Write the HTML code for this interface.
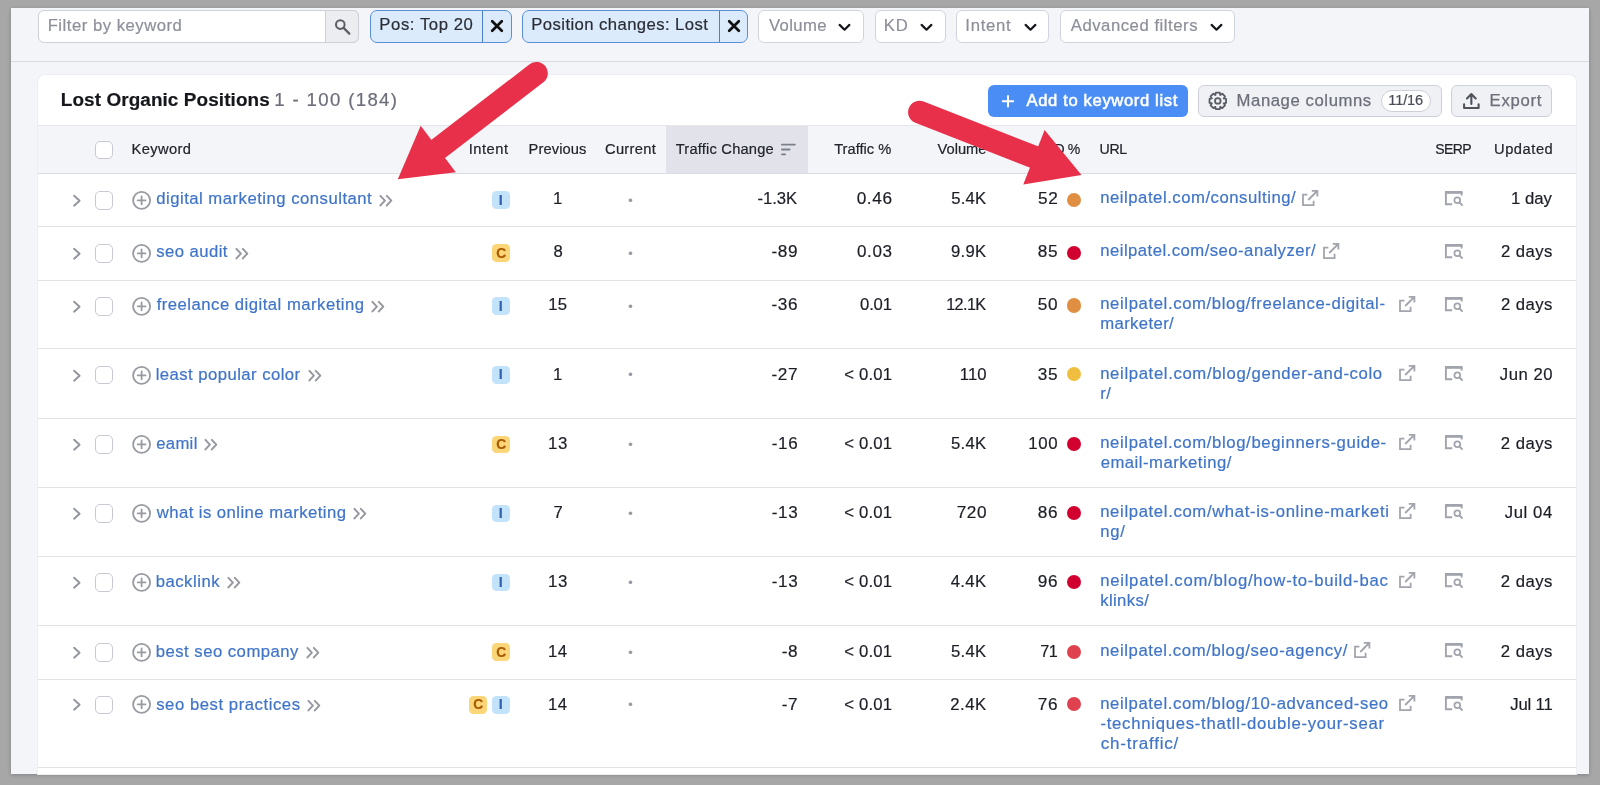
<!DOCTYPE html>
<html lang="en"><head><meta charset="utf-8"><title>Lost Organic Positions</title>
<style>
html,body{margin:0;padding:0}
body{width:1600px;height:785px;overflow:hidden;background:#a7a7a7;position:relative;font-family:"Liberation Sans", Arial, sans-serif}
#page{position:absolute;left:0;top:0;width:1600px;height:785px;overflow:hidden;will-change:transform}
#page::before{content:"";position:absolute;left:10.6px;top:8.1px;width:1578.9px;height:766.3px;background:#f4f5f9;box-shadow:0 1px 4px rgba(0,0,0,.22)}
div,svg,.t{position:absolute}
div{box-sizing:border-box}
section,article{display:contents}
.t{white-space:pre;line-height:20px;-webkit-text-stroke:.2px}
svg{overflow:visible}
</style></head>
<body>
<div id="page">
<section id="filters">
<div style="left:38px;top:10px;width:321px;height:32.5px;background:#fff;border:1px solid #cdd0d7;border-radius:6px"></div>
<div style="left:325px;top:10px;width:34px;height:32.5px;background:#ecedf1;border:1px solid #cdd0d7;border-radius:0 6px 6px 0"></div>
<span class="t" style="left:47.65px;top:16px;font-size:16.7px;color:#8d909a;letter-spacing:0.506px">Filter by keyword</span>
<svg style="left:331px;top:15px" width="22" height="22" viewBox="0 0 22 22" ><circle cx="9.3" cy="9.6" r="4.3" fill="none" stroke="#5a5d64" stroke-width="2"/><path d="M12.6 12.9 L18.3 18.6" stroke="#5a5d64" stroke-width="2.2" stroke-linecap="round"/></svg>
<div style="left:370px;top:10px;width:142px;height:32.5px;background:#dcebfb;border:1px solid #5a8fd8;border-radius:7px"></div>
<div style="left:481.5px;top:10.5px;width:1.6px;height:31.5px;background:#4a7fd0"></div>
<span class="t" style="left:379.35px;top:15px;font-size:16.7px;color:#2a2d36;letter-spacing:0.570px">Pos: Top 20</span>
<svg style="left:490.3px;top:19px" width="14" height="14" viewBox="0 0 14 14" ><path d="M2.2 2.2L11.8 11.8M11.8 2.2L2.2 11.8" stroke="#111" stroke-width="2.7" stroke-linecap="round"/></svg>
<div style="left:522px;top:10px;width:226px;height:32.5px;background:#dcebfb;border:1px solid #5a8fd8;border-radius:7px"></div>
<div style="left:718.5px;top:10.5px;width:1.6px;height:31.5px;background:#4a7fd0"></div>
<span class="t" style="left:531.25px;top:15px;font-size:16.7px;color:#2a2d36;letter-spacing:0.417px">Position changes: Lost</span>
<svg style="left:726.8px;top:19px" width="14" height="14" viewBox="0 0 14 14" ><path d="M2.2 2.2L11.8 11.8M11.8 2.2L2.2 11.8" stroke="#111" stroke-width="2.7" stroke-linecap="round"/></svg>
<div style="left:758px;top:10px;width:106px;height:32.5px;background:#fff;border:1px solid #d2d4db;border-radius:6px"></div>
<span class="t" style="left:769.00px;top:16px;font-size:16.7px;color:#8c8f99;letter-spacing:0.350px">Volume</span>
<svg style="left:837.25px;top:22px" width="15" height="11" viewBox="0 0 15 11" ><path d="M2.6 2.9L7.5 7.7L12.4 2.9" fill="none" stroke="#15171c" stroke-width="2.2" stroke-linecap="round" stroke-linejoin="round"/></svg>
<div style="left:874.5px;top:10px;width:71.5px;height:32.5px;background:#fff;border:1px solid #d2d4db;border-radius:6px"></div>
<span class="t" style="left:883.75px;top:16px;font-size:16.7px;color:#8c8f99;letter-spacing:0.750px">KD</span>
<svg style="left:918.5px;top:22px" width="15" height="11" viewBox="0 0 15 11" ><path d="M2.6 2.9L7.5 7.7L12.4 2.9" fill="none" stroke="#15171c" stroke-width="2.2" stroke-linecap="round" stroke-linejoin="round"/></svg>
<div style="left:956px;top:10px;width:93px;height:32.5px;background:#fff;border:1px solid #d2d4db;border-radius:6px"></div>
<span class="t" style="left:965.25px;top:16px;font-size:16.7px;color:#8c8f99;letter-spacing:0.750px">Intent</span>
<svg style="left:1023.0px;top:22px" width="15" height="11" viewBox="0 0 15 11" ><path d="M2.6 2.9L7.5 7.7L12.4 2.9" fill="none" stroke="#15171c" stroke-width="2.2" stroke-linecap="round" stroke-linejoin="round"/></svg>
<div style="left:1060px;top:10px;width:175px;height:32.5px;background:#fff;border:1px solid #d2d4db;border-radius:6px"></div>
<span class="t" style="left:1070.75px;top:16px;font-size:16.7px;color:#8c8f99;letter-spacing:0.533px">Advanced filters</span>
<svg style="left:1208.5px;top:22px" width="15" height="11" viewBox="0 0 15 11" ><path d="M2.6 2.9L7.5 7.7L12.4 2.9" fill="none" stroke="#15171c" stroke-width="2.2" stroke-linecap="round" stroke-linejoin="round"/></svg></section>
<div style="left:11px;top:60.5px;width:1578px;height:1.4px;background:#d9dae1"></div>
<section id="card">
<div style="left:38px;top:75px;width:1538px;height:699.4px;background:#fff;border-radius:7px 7px 0 0;box-shadow:0 0 0 1px #eceef2"></div>
<span class="t" style="left:60.75px;top:90px;font-size:18.9px;color:#15171c;letter-spacing:0.102px;font-weight:700">Lost Organic Positions</span>
<span class="t" style="left:274.25px;top:90px;font-size:18.6px;color:#6c6e79;letter-spacing:1.354px">1 - 100 (184)</span>
<div style="left:988px;top:85px;width:200px;height:32px;background:#4a8ef5;border-radius:6px"></div>
<svg style="left:1000.5px;top:94px" width="14" height="14" viewBox="0 0 14 14" ><path d="M7 2V12.4M1.8 7.2H12.2" stroke="#fff" stroke-width="2" stroke-linecap="round"/></svg>
<span class="t" style="left:1026.55px;top:91px;font-size:16.6px;color:#fff;letter-spacing:0.636px;-webkit-text-stroke:0.55px #fff">Add to keyword list</span>
<div style="left:1198px;top:84.5px;width:243.5px;height:32.5px;background:#f0f1f5;border:1px solid #cdd0d8;border-radius:6px"></div>
<svg style="left:1207px;top:90px" width="22" height="22" viewBox="0 0 22 22" ><path d="M8.35 4.99L8.82 2.63L12.78 2.63L13.25 4.99L13.25 4.99L15.24 3.65L18.05 6.46L16.71 8.45L16.71 8.45L19.07 8.92L19.07 12.88L16.71 13.35L16.71 13.35L18.05 15.34L15.24 18.15L13.25 16.81L13.25 16.81L12.78 19.17L8.82 19.17L8.35 16.81L8.35 16.81L6.36 18.15L3.55 15.34L4.89 13.35L4.89 13.35L2.53 12.88L2.53 8.92L4.89 8.45L4.89 8.45L3.55 6.46L6.36 3.65L8.35 4.99Z" fill="none" stroke="#585b64" stroke-width="1.8" stroke-linejoin="round"/><circle cx="10.8" cy="10.9" r="2.8" fill="none" stroke="#585b64" stroke-width="1.8"/></svg>
<span class="t" style="left:1236.55px;top:91px;font-size:16.7px;color:#6c6f7a;letter-spacing:0.581px;-webkit-text-stroke:0.25px #6c6f7a">Manage columns</span>
<div style="left:1380.5px;top:90px;width:50px;height:22px;background:#fff;border:1px solid #cdd0d8;border-radius:11px"></div>
<span class="t" style="left:1388.30px;top:90px;font-size:14.6px;color:#4a4d57;letter-spacing:-0.150px">11/16</span>
<div style="left:1451px;top:84.5px;width:101px;height:32.5px;background:#f0f1f5;border:1px solid #cdd0d8;border-radius:6px"></div>
<svg style="left:1461px;top:91px" width="20" height="20" viewBox="0 0 20 20" ><path d="M3.1 13.2V17H17.6V13.2" fill="none" stroke="#50535c" stroke-width="2.1" stroke-linejoin="round" stroke-linecap="round"/><path d="M10.35 13V3.6M6 7.4L10.35 3.1L14.7 7.4" fill="none" stroke="#50535c" stroke-width="2.1" stroke-linecap="round" stroke-linejoin="round"/></svg>
<span class="t" style="left:1489.55px;top:91px;font-size:16.7px;color:#6c6f7a;letter-spacing:0.700px;-webkit-text-stroke:0.25px #6c6f7a">Export</span>
<div style="left:38px;top:125px;width:1538px;height:48.5px;background:#f4f5f9;border-top:1px solid #e6e7ec;border-bottom:1px solid #dcdde4;box-sizing:border-box"></div>
<div style="left:666px;top:125.5px;width:141.8px;height:47.5px;background:#e2e3ea"></div>
<div style="left:94.5px;top:140.5px;width:18.8px;height:18.8px;background:#fff;border:1px solid #c7cad2;border-radius:5px;box-sizing:border-box"></div>
<span class="t" style="left:131.50px;top:139px;font-size:14.7px;color:#22242c;letter-spacing:0.375px">Keyword</span>
<span class="t" style="left:468.75px;top:139px;font-size:14.7px;color:#22242c;letter-spacing:0.500px">Intent</span>
<span class="t" style="left:528.50px;top:139px;font-size:14.7px;color:#22242c;letter-spacing:0.107px">Previous</span>
<span class="t" style="left:605.00px;top:139px;font-size:14.7px;color:#22242c;letter-spacing:0.292px">Current</span>
<span class="t" style="left:675.75px;top:139px;font-size:14.7px;color:#22242c;letter-spacing:0.192px">Traffic Change</span>
<svg style="left:780px;top:142px" width="17" height="15" viewBox="0 0 17 15" ><path d="M1.9 2.7H14.9M1.9 7.5H9.6M1.9 12.3H5.2" stroke="#7d808a" stroke-width="1.8" stroke-linecap="round"/></svg>
<span class="t" style="left:834.15px;top:139px;font-size:14.7px;color:#22242c;letter-spacing:0.013px">Traffic %</span>
<span class="t" style="left:937.50px;top:139px;font-size:14.7px;color:#22242c;letter-spacing:0.000px">Volume</span>
<span class="t" style="left:1045.55px;top:139px;font-size:14.04px;color:#22242c;letter-spacing:-0.373px">KD %</span>
<span class="t" style="left:1099.54px;top:139px;font-size:14.15px;color:#22242c;letter-spacing:-0.350px">URL</span>
<span class="t" style="left:1435.27px;top:139px;font-size:14.04px;color:#22242c;letter-spacing:-0.600px">SERP</span>
<span class="t" style="left:1494.00px;top:139px;font-size:14.7px;color:#22242c;letter-spacing:0.542px">Updated</span>
<article class="row">
<svg style="left:70px;top:192.8px" width="14" height="16" viewBox="0 0 14 16" ><path d="M4.1 2.7L9.6 7.7L4.1 12.7" fill="none" stroke="#92959c" stroke-width="1.9" stroke-linecap="round" stroke-linejoin="round"/></svg>
<div style="left:94.5px;top:191.0px;width:18.8px;height:18.8px;background:#fff;border:1px solid #c7cad2;border-radius:5px"></div>
<svg style="left:131px;top:189.9px" width="22" height="22" viewBox="0 0 22 22" ><circle cx="10.6" cy="10.4" r="8.5" fill="none" stroke="#989ba1" stroke-width="1.8"/><path d="M10.6 6.5V14.3M6.7 10.4H14.5" stroke="#989ba1" stroke-width="1.8" stroke-linecap="round"/></svg>
<span class="t" style="left:156.20px;top:189px;font-size:16.7px;color:#3f74c7;letter-spacing:0.493px">digital marketing consultant</span>
<svg style="left:378.35px;top:193.0px" width="17" height="16" viewBox="0 0 17 16" ><path d="M2.4 2.9L6.9 7.65L2.4 12.4M8.8 2.9L13.3 7.65L8.8 12.4" fill="none" stroke="#95989e" stroke-width="2" stroke-linecap="round" stroke-linejoin="round"/></svg>
<div style="left:491.5px;top:191.3px;width:18.6px;height:17.8px;background:#c3e3fb;border-radius:4.5px"></div>
<span class="t" style="left:498.79px;top:190px;font-size:14.4px;color:#3463b4;font-weight:700">I</span>
<span class="t" style="left:553.12px;top:189px;font-size:16.7px;color:#1c1e26;letter-spacing:0.000px">1</span>
<span class="t" style="left:628.14px;top:191px;font-size:12.6px;color:#999ba2">•</span>
<span class="t" style="left:757.50px;top:189px;font-size:16.7px;color:#1c1e26;letter-spacing:-0.062px">-1.3K</span>
<span class="t" style="left:856.65px;top:188px;font-size:17.2px;color:#1c1e26;letter-spacing:0.650px">0.46</span>
<span class="t" style="left:951.25px;top:189px;font-size:16.7px;color:#1c1e26;letter-spacing:0.167px">5.4K</span>
<span class="t" style="left:1038.07px;top:188px;font-size:17.2px;color:#1c1e26;letter-spacing:0.650px">52</span>
<div style="left:1067px;top:192.5px;width:14.2px;height:14.2px;background:#e08e41;border-radius:50%"></div>
<span class="t" style="left:1100.20px;top:188px;font-size:16.7px;color:#3f74c7;letter-spacing:0.533px">neilpatel.com/consulting/</span>
<svg style="left:1300.9px;top:189.0px" width="19" height="19" viewBox="0 0 19 19" ><path d="M6.4 5.6H2V16.2H12.6V11.8" fill="none" stroke="#a3a5ac" stroke-width="1.8"/><path d="M7.2 11L16.2 2M10.8 1.9H16.4V7.5" fill="none" stroke="#a3a5ac" stroke-width="1.8"/></svg>
<svg style="left:1444px;top:190.0px" width="20" height="17" viewBox="0 0 20 17" ><path d="M1 1H18.5V3.8H1Z" fill="#a1a4ac"/><path d="M1.9 2V14.2H8.2M17.6 2V5.6" fill="none" stroke="#a1a4ac" stroke-width="1.9"/><circle cx="13.3" cy="10.3" r="2.9" fill="none" stroke="#a1a4ac" stroke-width="1.7"/><path d="M15.4 12.4L18 15" stroke="#a1a4ac" stroke-width="1.9" stroke-linecap="round"/></svg>
<span class="t" style="left:1511.05px;top:189px;font-size:16.7px;color:#1c1e26;letter-spacing:-0.012px">1 day</span></article>
<article class="row">
<div style="left:38px;top:226px;width:1538px;height:1px;background:#e1e2e8"></div>
<svg style="left:70px;top:245.8px" width="14" height="16" viewBox="0 0 14 16" ><path d="M4.1 2.7L9.6 7.7L4.1 12.7" fill="none" stroke="#92959c" stroke-width="1.9" stroke-linecap="round" stroke-linejoin="round"/></svg>
<div style="left:94.5px;top:244.0px;width:18.8px;height:18.8px;background:#fff;border:1px solid #c7cad2;border-radius:5px"></div>
<svg style="left:131px;top:242.9px" width="22" height="22" viewBox="0 0 22 22" ><circle cx="10.6" cy="10.4" r="8.5" fill="none" stroke="#989ba1" stroke-width="1.8"/><path d="M10.6 6.5V14.3M6.7 10.4H14.5" stroke="#989ba1" stroke-width="1.8" stroke-linecap="round"/></svg>
<span class="t" style="left:156.20px;top:242px;font-size:16.7px;color:#3f74c7;letter-spacing:0.444px">seo audit</span>
<svg style="left:234.1px;top:246.0px" width="17" height="16" viewBox="0 0 17 16" ><path d="M2.4 2.9L6.9 7.65L2.4 12.4M8.8 2.9L13.3 7.65L8.8 12.4" fill="none" stroke="#95989e" stroke-width="2" stroke-linecap="round" stroke-linejoin="round"/></svg>
<div style="left:491.5px;top:244.3px;width:18.6px;height:17.8px;background:#fbd679;border-radius:4.5px"></div>
<span class="t" style="left:496.32px;top:244px;font-size:13.8px;color:#a95a00;font-weight:700">C</span>
<span class="t" style="left:553.38px;top:242px;font-size:16.7px;color:#1c1e26;letter-spacing:0.000px">8</span>
<span class="t" style="left:628.14px;top:244px;font-size:12.6px;color:#999ba2">•</span>
<span class="t" style="left:771.50px;top:241px;font-size:17.2px;color:#1c1e26;letter-spacing:0.650px">-89</span>
<span class="t" style="left:856.99px;top:242px;font-size:17.02px;color:#1c1e26;letter-spacing:0.650px">0.03</span>
<span class="t" style="left:951.00px;top:242px;font-size:16.7px;color:#1c1e26;letter-spacing:0.250px">9.9K</span>
<span class="t" style="left:1037.81px;top:241px;font-size:17.2px;color:#1c1e26;letter-spacing:0.650px">85</span>
<div style="left:1067px;top:245.5px;width:14.2px;height:14.2px;background:#d1002f;border-radius:50%"></div>
<span class="t" style="left:1100.20px;top:241px;font-size:16.7px;color:#3f74c7;letter-spacing:0.473px">neilpatel.com/seo-analyzer/</span>
<svg style="left:1321.5px;top:242.0px" width="19" height="19" viewBox="0 0 19 19" ><path d="M6.4 5.6H2V16.2H12.6V11.8" fill="none" stroke="#a3a5ac" stroke-width="1.8"/><path d="M7.2 11L16.2 2M10.8 1.9H16.4V7.5" fill="none" stroke="#a3a5ac" stroke-width="1.8"/></svg>
<svg style="left:1444px;top:243.0px" width="20" height="17" viewBox="0 0 20 17" ><path d="M1 1H18.5V3.8H1Z" fill="#a1a4ac"/><path d="M1.9 2V14.2H8.2M17.6 2V5.6" fill="none" stroke="#a1a4ac" stroke-width="1.9"/><circle cx="13.3" cy="10.3" r="2.9" fill="none" stroke="#a1a4ac" stroke-width="1.7"/><path d="M15.4 12.4L18 15" stroke="#a1a4ac" stroke-width="1.9" stroke-linecap="round"/></svg>
<span class="t" style="left:1501.00px;top:242px;font-size:16.7px;color:#1c1e26;letter-spacing:0.450px">2 days</span></article>
<article class="row">
<div style="left:38px;top:280px;width:1538px;height:1px;background:#e1e2e8"></div>
<svg style="left:70px;top:298.7px" width="14" height="16" viewBox="0 0 14 16" ><path d="M4.1 2.7L9.6 7.7L4.1 12.7" fill="none" stroke="#92959c" stroke-width="1.9" stroke-linecap="round" stroke-linejoin="round"/></svg>
<div style="left:94.5px;top:296.9px;width:18.8px;height:18.8px;background:#fff;border:1px solid #c7cad2;border-radius:5px"></div>
<svg style="left:131px;top:295.8px" width="22" height="22" viewBox="0 0 22 22" ><circle cx="10.6" cy="10.4" r="8.5" fill="none" stroke="#989ba1" stroke-width="1.8"/><path d="M10.6 6.5V14.3M6.7 10.4H14.5" stroke="#989ba1" stroke-width="1.8" stroke-linecap="round"/></svg>
<span class="t" style="left:156.70px;top:295px;font-size:16.7px;color:#3f74c7;letter-spacing:0.483px">freelance digital marketing</span>
<svg style="left:369.6px;top:298.9px" width="17" height="16" viewBox="0 0 17 16" ><path d="M2.4 2.9L6.9 7.65L2.4 12.4M8.8 2.9L13.3 7.65L8.8 12.4" fill="none" stroke="#95989e" stroke-width="2" stroke-linecap="round" stroke-linejoin="round"/></svg>
<div style="left:491.5px;top:297.2px;width:18.6px;height:17.8px;background:#c3e3fb;border-radius:4.5px"></div>
<span class="t" style="left:498.79px;top:296px;font-size:14.4px;color:#3463b4;font-weight:700">I</span>
<span class="t" style="left:548.35px;top:295px;font-size:16.7px;color:#1c1e26;letter-spacing:0.050px">15</span>
<span class="t" style="left:628.14px;top:297px;font-size:12.6px;color:#999ba2">•</span>
<span class="t" style="left:771.50px;top:294px;font-size:17.2px;color:#1c1e26;letter-spacing:0.650px">-36</span>
<span class="t" style="left:860.00px;top:295px;font-size:16.7px;color:#1c1e26;letter-spacing:-0.150px">0.01</span>
<span class="t" style="left:946.21px;top:294px;font-size:16.2px;color:#1c1e26;letter-spacing:-0.600px">12.1K</span>
<span class="t" style="left:1037.81px;top:294px;font-size:17.2px;color:#1c1e26;letter-spacing:0.650px">50</span>
<div style="left:1067px;top:298.4px;width:14.2px;height:14.2px;background:#e08e41;border-radius:50%"></div>
<span class="t" style="left:1100.20px;top:294px;font-size:16.7px;color:#3f74c7;letter-spacing:0.619px">neilpatel.com/blog/freelance-digital-</span>
<span class="t" style="left:1100.20px;top:314px;font-size:16.7px;color:#3f74c7;letter-spacing:0.381px">marketer/</span>
<svg style="left:1398.25px;top:294.9px" width="19" height="19" viewBox="0 0 19 19" ><path d="M6.4 5.6H2V16.2H12.6V11.8" fill="none" stroke="#a3a5ac" stroke-width="1.8"/><path d="M7.2 11L16.2 2M10.8 1.9H16.4V7.5" fill="none" stroke="#a3a5ac" stroke-width="1.8"/></svg>
<svg style="left:1444px;top:295.9px" width="20" height="17" viewBox="0 0 20 17" ><path d="M1 1H18.5V3.8H1Z" fill="#a1a4ac"/><path d="M1.9 2V14.2H8.2M17.6 2V5.6" fill="none" stroke="#a1a4ac" stroke-width="1.9"/><circle cx="13.3" cy="10.3" r="2.9" fill="none" stroke="#a1a4ac" stroke-width="1.7"/><path d="M15.4 12.4L18 15" stroke="#a1a4ac" stroke-width="1.9" stroke-linecap="round"/></svg>
<span class="t" style="left:1501.00px;top:295px;font-size:16.7px;color:#1c1e26;letter-spacing:0.450px">2 days</span></article>
<article class="row">
<div style="left:38px;top:348px;width:1538px;height:1px;background:#e1e2e8"></div>
<svg style="left:70px;top:367.5px" width="14" height="16" viewBox="0 0 14 16" ><path d="M4.1 2.7L9.6 7.7L4.1 12.7" fill="none" stroke="#92959c" stroke-width="1.9" stroke-linecap="round" stroke-linejoin="round"/></svg>
<div style="left:94.5px;top:365.7px;width:18.8px;height:18.8px;background:#fff;border:1px solid #c7cad2;border-radius:5px"></div>
<svg style="left:131px;top:364.6px" width="22" height="22" viewBox="0 0 22 22" ><circle cx="10.6" cy="10.4" r="8.5" fill="none" stroke="#989ba1" stroke-width="1.8"/><path d="M10.6 6.5V14.3M6.7 10.4H14.5" stroke="#989ba1" stroke-width="1.8" stroke-linecap="round"/></svg>
<span class="t" style="left:155.70px;top:365px;font-size:16.7px;color:#3f74c7;letter-spacing:0.447px">least popular color</span>
<svg style="left:306.6px;top:367.7px" width="17" height="16" viewBox="0 0 17 16" ><path d="M2.4 2.9L6.9 7.65L2.4 12.4M8.8 2.9L13.3 7.65L8.8 12.4" fill="none" stroke="#95989e" stroke-width="2" stroke-linecap="round" stroke-linejoin="round"/></svg>
<div style="left:491.5px;top:366.0px;width:18.6px;height:17.8px;background:#c3e3fb;border-radius:4.5px"></div>
<span class="t" style="left:498.79px;top:364px;font-size:14.4px;color:#3463b4;font-weight:700">I</span>
<span class="t" style="left:553.12px;top:365px;font-size:16.7px;color:#1c1e26;letter-spacing:0.000px">1</span>
<span class="t" style="left:628.14px;top:365px;font-size:12.6px;color:#999ba2">•</span>
<span class="t" style="left:771.50px;top:364px;font-size:17.2px;color:#1c1e26;letter-spacing:0.650px">-27</span>
<span class="t" style="left:844.25px;top:365px;font-size:16.7px;color:#1c1e26;letter-spacing:0.160px">&lt; 0.01</span>
<span class="t" style="left:959.75px;top:365px;font-size:16.7px;color:#1c1e26;letter-spacing:0.125px">110</span>
<span class="t" style="left:1037.81px;top:364px;font-size:17.2px;color:#1c1e26;letter-spacing:0.650px">35</span>
<div style="left:1067px;top:367.2px;width:14.2px;height:14.2px;background:#efbe3f;border-radius:50%"></div>
<span class="t" style="left:1100.20px;top:364px;font-size:16.7px;color:#3f74c7;letter-spacing:0.645px">neilpatel.com/blog/gender-and-colo</span>
<span class="t" style="left:1100.20px;top:384px;font-size:16.7px;color:#3f74c7;letter-spacing:0.550px">r/</span>
<svg style="left:1398.25px;top:363.7px" width="19" height="19" viewBox="0 0 19 19" ><path d="M6.4 5.6H2V16.2H12.6V11.8" fill="none" stroke="#a3a5ac" stroke-width="1.8"/><path d="M7.2 11L16.2 2M10.8 1.9H16.4V7.5" fill="none" stroke="#a3a5ac" stroke-width="1.8"/></svg>
<svg style="left:1444px;top:364.7px" width="20" height="17" viewBox="0 0 20 17" ><path d="M1 1H18.5V3.8H1Z" fill="#a1a4ac"/><path d="M1.9 2V14.2H8.2M17.6 2V5.6" fill="none" stroke="#a1a4ac" stroke-width="1.9"/><circle cx="13.3" cy="10.3" r="2.9" fill="none" stroke="#a1a4ac" stroke-width="1.7"/><path d="M15.4 12.4L18 15" stroke="#a1a4ac" stroke-width="1.9" stroke-linecap="round"/></svg>
<span class="t" style="left:1499.75px;top:365px;font-size:16.7px;color:#1c1e26;letter-spacing:0.550px">Jun 20</span></article>
<article class="row">
<div style="left:38px;top:418px;width:1538px;height:1px;background:#e1e2e8"></div>
<svg style="left:70px;top:437.0px" width="14" height="16" viewBox="0 0 14 16" ><path d="M4.1 2.7L9.6 7.7L4.1 12.7" fill="none" stroke="#92959c" stroke-width="1.9" stroke-linecap="round" stroke-linejoin="round"/></svg>
<div style="left:94.5px;top:435.2px;width:18.8px;height:18.8px;background:#fff;border:1px solid #c7cad2;border-radius:5px"></div>
<svg style="left:131px;top:434.1px" width="22" height="22" viewBox="0 0 22 22" ><circle cx="10.6" cy="10.4" r="8.5" fill="none" stroke="#989ba1" stroke-width="1.8"/><path d="M10.6 6.5V14.3M6.7 10.4H14.5" stroke="#989ba1" stroke-width="1.8" stroke-linecap="round"/></svg>
<span class="t" style="left:156.20px;top:434px;font-size:16.7px;color:#3f74c7;letter-spacing:0.325px">eamil</span>
<svg style="left:203.1px;top:437.2px" width="17" height="16" viewBox="0 0 17 16" ><path d="M2.4 2.9L6.9 7.65L2.4 12.4M8.8 2.9L13.3 7.65L8.8 12.4" fill="none" stroke="#95989e" stroke-width="2" stroke-linecap="round" stroke-linejoin="round"/></svg>
<div style="left:491.5px;top:435.5px;width:18.6px;height:17.8px;background:#fbd679;border-radius:4.5px"></div>
<span class="t" style="left:496.32px;top:435px;font-size:13.8px;color:#a95a00;font-weight:700">C</span>
<span class="t" style="left:547.99px;top:434px;font-size:16.85px;color:#1c1e26;letter-spacing:0.600px">13</span>
<span class="t" style="left:628.14px;top:435px;font-size:12.6px;color:#999ba2">•</span>
<span class="t" style="left:771.74px;top:434px;font-size:17.03px;color:#1c1e26;letter-spacing:0.650px">-16</span>
<span class="t" style="left:844.25px;top:434px;font-size:16.7px;color:#1c1e26;letter-spacing:0.160px">&lt; 0.01</span>
<span class="t" style="left:951.00px;top:434px;font-size:16.7px;color:#1c1e26;letter-spacing:0.250px">5.4K</span>
<span class="t" style="left:1028.24px;top:434px;font-size:16.83px;color:#1c1e26;letter-spacing:0.650px">100</span>
<div style="left:1067px;top:436.7px;width:14.2px;height:14.2px;background:#d1002f;border-radius:50%"></div>
<span class="t" style="left:1100.20px;top:433px;font-size:16.7px;color:#3f74c7;letter-spacing:0.634px">neilpatel.com/blog/beginners-guide-</span>
<span class="t" style="left:1100.70px;top:453px;font-size:16.7px;color:#3f74c7;letter-spacing:0.487px">email-marketing/</span>
<svg style="left:1398.25px;top:433.2px" width="19" height="19" viewBox="0 0 19 19" ><path d="M6.4 5.6H2V16.2H12.6V11.8" fill="none" stroke="#a3a5ac" stroke-width="1.8"/><path d="M7.2 11L16.2 2M10.8 1.9H16.4V7.5" fill="none" stroke="#a3a5ac" stroke-width="1.8"/></svg>
<svg style="left:1444px;top:434.2px" width="20" height="17" viewBox="0 0 20 17" ><path d="M1 1H18.5V3.8H1Z" fill="#a1a4ac"/><path d="M1.9 2V14.2H8.2M17.6 2V5.6" fill="none" stroke="#a1a4ac" stroke-width="1.9"/><circle cx="13.3" cy="10.3" r="2.9" fill="none" stroke="#a1a4ac" stroke-width="1.7"/><path d="M15.4 12.4L18 15" stroke="#a1a4ac" stroke-width="1.9" stroke-linecap="round"/></svg>
<span class="t" style="left:1500.75px;top:434px;font-size:16.7px;color:#1c1e26;letter-spacing:0.500px">2 days</span></article>
<article class="row">
<div style="left:38px;top:487px;width:1538px;height:1px;background:#e1e2e8"></div>
<svg style="left:70px;top:506.0px" width="14" height="16" viewBox="0 0 14 16" ><path d="M4.1 2.7L9.6 7.7L4.1 12.7" fill="none" stroke="#92959c" stroke-width="1.9" stroke-linecap="round" stroke-linejoin="round"/></svg>
<div style="left:94.5px;top:504.2px;width:18.8px;height:18.8px;background:#fff;border:1px solid #c7cad2;border-radius:5px"></div>
<svg style="left:131px;top:503.1px" width="22" height="22" viewBox="0 0 22 22" ><circle cx="10.6" cy="10.4" r="8.5" fill="none" stroke="#989ba1" stroke-width="1.8"/><path d="M10.6 6.5V14.3M6.7 10.4H14.5" stroke="#989ba1" stroke-width="1.8" stroke-linecap="round"/></svg>
<span class="t" style="left:156.70px;top:503px;font-size:16.7px;color:#3f74c7;letter-spacing:0.448px">what is online marketing</span>
<svg style="left:351.6px;top:506.2px" width="17" height="16" viewBox="0 0 17 16" ><path d="M2.4 2.9L6.9 7.65L2.4 12.4M8.8 2.9L13.3 7.65L8.8 12.4" fill="none" stroke="#95989e" stroke-width="2" stroke-linecap="round" stroke-linejoin="round"/></svg>
<div style="left:491.5px;top:504.5px;width:18.6px;height:17.8px;background:#c3e3fb;border-radius:4.5px"></div>
<span class="t" style="left:498.79px;top:503px;font-size:14.4px;color:#3463b4;font-weight:700">I</span>
<span class="t" style="left:553.38px;top:503px;font-size:16.7px;color:#1c1e26;letter-spacing:0.000px">7</span>
<span class="t" style="left:628.14px;top:504px;font-size:12.6px;color:#999ba2">•</span>
<span class="t" style="left:771.74px;top:503px;font-size:17.03px;color:#1c1e26;letter-spacing:0.650px">-13</span>
<span class="t" style="left:844.25px;top:503px;font-size:16.7px;color:#1c1e26;letter-spacing:0.160px">&lt; 0.01</span>
<span class="t" style="left:956.63px;top:502px;font-size:17.2px;color:#1c1e26;letter-spacing:0.650px">720</span>
<span class="t" style="left:1037.81px;top:502px;font-size:17.2px;color:#1c1e26;letter-spacing:0.650px">86</span>
<div style="left:1067px;top:505.7px;width:14.2px;height:14.2px;background:#d1002f;border-radius:50%"></div>
<span class="t" style="left:1100.20px;top:502px;font-size:16.7px;color:#3f74c7;letter-spacing:0.644px">neilpatel.com/what-is-online-marketi</span>
<span class="t" style="left:1100.20px;top:522px;font-size:16.7px;color:#3f74c7;letter-spacing:0.775px">ng/</span>
<svg style="left:1398.25px;top:502.2px" width="19" height="19" viewBox="0 0 19 19" ><path d="M6.4 5.6H2V16.2H12.6V11.8" fill="none" stroke="#a3a5ac" stroke-width="1.8"/><path d="M7.2 11L16.2 2M10.8 1.9H16.4V7.5" fill="none" stroke="#a3a5ac" stroke-width="1.8"/></svg>
<svg style="left:1444px;top:503.2px" width="20" height="17" viewBox="0 0 20 17" ><path d="M1 1H18.5V3.8H1Z" fill="#a1a4ac"/><path d="M1.9 2V14.2H8.2M17.6 2V5.6" fill="none" stroke="#a1a4ac" stroke-width="1.9"/><circle cx="13.3" cy="10.3" r="2.9" fill="none" stroke="#a1a4ac" stroke-width="1.7"/><path d="M15.4 12.4L18 15" stroke="#a1a4ac" stroke-width="1.9" stroke-linecap="round"/></svg>
<span class="t" style="left:1504.75px;top:503px;font-size:16.7px;color:#1c1e26;letter-spacing:0.600px">Jul 04</span></article>
<article class="row">
<div style="left:38px;top:556px;width:1538px;height:1px;background:#e1e2e8"></div>
<svg style="left:70px;top:575.0px" width="14" height="16" viewBox="0 0 14 16" ><path d="M4.1 2.7L9.6 7.7L4.1 12.7" fill="none" stroke="#92959c" stroke-width="1.9" stroke-linecap="round" stroke-linejoin="round"/></svg>
<div style="left:94.5px;top:573.2px;width:18.8px;height:18.8px;background:#fff;border:1px solid #c7cad2;border-radius:5px"></div>
<svg style="left:131px;top:572.1px" width="22" height="22" viewBox="0 0 22 22" ><circle cx="10.6" cy="10.4" r="8.5" fill="none" stroke="#989ba1" stroke-width="1.8"/><path d="M10.6 6.5V14.3M6.7 10.4H14.5" stroke="#989ba1" stroke-width="1.8" stroke-linecap="round"/></svg>
<span class="t" style="left:155.70px;top:572px;font-size:16.7px;color:#3f74c7;letter-spacing:0.507px">backlink</span>
<svg style="left:226.1px;top:575.2px" width="17" height="16" viewBox="0 0 17 16" ><path d="M2.4 2.9L6.9 7.65L2.4 12.4M8.8 2.9L13.3 7.65L8.8 12.4" fill="none" stroke="#95989e" stroke-width="2" stroke-linecap="round" stroke-linejoin="round"/></svg>
<div style="left:491.5px;top:573.5px;width:18.6px;height:17.8px;background:#c3e3fb;border-radius:4.5px"></div>
<span class="t" style="left:498.79px;top:572px;font-size:14.4px;color:#3463b4;font-weight:700">I</span>
<span class="t" style="left:547.99px;top:572px;font-size:16.85px;color:#1c1e26;letter-spacing:0.600px">13</span>
<span class="t" style="left:628.14px;top:573px;font-size:12.6px;color:#999ba2">•</span>
<span class="t" style="left:771.74px;top:572px;font-size:17.03px;color:#1c1e26;letter-spacing:0.650px">-13</span>
<span class="t" style="left:844.25px;top:572px;font-size:16.7px;color:#1c1e26;letter-spacing:0.160px">&lt; 0.01</span>
<span class="t" style="left:950.75px;top:572px;font-size:16.7px;color:#1c1e26;letter-spacing:0.333px">4.4K</span>
<span class="t" style="left:1037.81px;top:571px;font-size:17.2px;color:#1c1e26;letter-spacing:0.650px">96</span>
<div style="left:1067px;top:574.7px;width:14.2px;height:14.2px;background:#d1002f;border-radius:50%"></div>
<span class="t" style="left:1100.20px;top:571px;font-size:16.7px;color:#3f74c7;letter-spacing:0.737px">neilpatel.com/blog/how-to-build-bac</span>
<span class="t" style="left:1100.20px;top:591px;font-size:16.7px;color:#3f74c7;letter-spacing:0.383px">klinks/</span>
<svg style="left:1398.25px;top:571.2px" width="19" height="19" viewBox="0 0 19 19" ><path d="M6.4 5.6H2V16.2H12.6V11.8" fill="none" stroke="#a3a5ac" stroke-width="1.8"/><path d="M7.2 11L16.2 2M10.8 1.9H16.4V7.5" fill="none" stroke="#a3a5ac" stroke-width="1.8"/></svg>
<svg style="left:1444px;top:572.2px" width="20" height="17" viewBox="0 0 20 17" ><path d="M1 1H18.5V3.8H1Z" fill="#a1a4ac"/><path d="M1.9 2V14.2H8.2M17.6 2V5.6" fill="none" stroke="#a1a4ac" stroke-width="1.9"/><circle cx="13.3" cy="10.3" r="2.9" fill="none" stroke="#a1a4ac" stroke-width="1.7"/><path d="M15.4 12.4L18 15" stroke="#a1a4ac" stroke-width="1.9" stroke-linecap="round"/></svg>
<span class="t" style="left:1500.75px;top:572px;font-size:16.7px;color:#1c1e26;letter-spacing:0.500px">2 days</span></article>
<article class="row">
<div style="left:38px;top:625px;width:1538px;height:1px;background:#e1e2e8"></div>
<svg style="left:70px;top:644.8px" width="14" height="16" viewBox="0 0 14 16" ><path d="M4.1 2.7L9.6 7.7L4.1 12.7" fill="none" stroke="#92959c" stroke-width="1.9" stroke-linecap="round" stroke-linejoin="round"/></svg>
<div style="left:94.5px;top:643.0px;width:18.8px;height:18.8px;background:#fff;border:1px solid #c7cad2;border-radius:5px"></div>
<svg style="left:131px;top:641.9px" width="22" height="22" viewBox="0 0 22 22" ><circle cx="10.6" cy="10.4" r="8.5" fill="none" stroke="#989ba1" stroke-width="1.8"/><path d="M10.6 6.5V14.3M6.7 10.4H14.5" stroke="#989ba1" stroke-width="1.8" stroke-linecap="round"/></svg>
<span class="t" style="left:155.70px;top:642px;font-size:16.7px;color:#3f74c7;letter-spacing:0.487px">best seo company</span>
<svg style="left:305.1px;top:645.0px" width="17" height="16" viewBox="0 0 17 16" ><path d="M2.4 2.9L6.9 7.65L2.4 12.4M8.8 2.9L13.3 7.65L8.8 12.4" fill="none" stroke="#95989e" stroke-width="2" stroke-linecap="round" stroke-linejoin="round"/></svg>
<div style="left:491.5px;top:643.3px;width:18.6px;height:17.8px;background:#fbd679;border-radius:4.5px"></div>
<span class="t" style="left:496.32px;top:643px;font-size:13.8px;color:#a95a00;font-weight:700">C</span>
<span class="t" style="left:548.00px;top:642px;font-size:16.7px;color:#1c1e26;letter-spacing:0.500px">14</span>
<span class="t" style="left:628.14px;top:643px;font-size:12.6px;color:#999ba2">•</span>
<span class="t" style="left:781.67px;top:641px;font-size:17.2px;color:#1c1e26;letter-spacing:0.650px">-8</span>
<span class="t" style="left:844.25px;top:642px;font-size:16.7px;color:#1c1e26;letter-spacing:0.160px">&lt; 0.01</span>
<span class="t" style="left:951.00px;top:642px;font-size:16.7px;color:#1c1e26;letter-spacing:0.250px">5.4K</span>
<span class="t" style="left:1040.27px;top:641px;font-size:16.2px;color:#1c1e26;letter-spacing:-0.490px">71</span>
<div style="left:1067px;top:644.5px;width:14.2px;height:14.2px;background:#e0414e;border-radius:50%"></div>
<span class="t" style="left:1100.20px;top:641px;font-size:16.7px;color:#3f74c7;letter-spacing:0.588px">neilpatel.com/blog/seo-agency/</span>
<svg style="left:1353px;top:641.0px" width="19" height="19" viewBox="0 0 19 19" ><path d="M6.4 5.6H2V16.2H12.6V11.8" fill="none" stroke="#a3a5ac" stroke-width="1.8"/><path d="M7.2 11L16.2 2M10.8 1.9H16.4V7.5" fill="none" stroke="#a3a5ac" stroke-width="1.8"/></svg>
<svg style="left:1444px;top:642.0px" width="20" height="17" viewBox="0 0 20 17" ><path d="M1 1H18.5V3.8H1Z" fill="#a1a4ac"/><path d="M1.9 2V14.2H8.2M17.6 2V5.6" fill="none" stroke="#a1a4ac" stroke-width="1.9"/><circle cx="13.3" cy="10.3" r="2.9" fill="none" stroke="#a1a4ac" stroke-width="1.7"/><path d="M15.4 12.4L18 15" stroke="#a1a4ac" stroke-width="1.9" stroke-linecap="round"/></svg>
<span class="t" style="left:1500.75px;top:642px;font-size:16.7px;color:#1c1e26;letter-spacing:0.500px">2 days</span></article>
<article class="row">
<div style="left:38px;top:679px;width:1538px;height:1px;background:#e1e2e8"></div>
<svg style="left:70px;top:697.3px" width="14" height="16" viewBox="0 0 14 16" ><path d="M4.1 2.7L9.6 7.7L4.1 12.7" fill="none" stroke="#92959c" stroke-width="1.9" stroke-linecap="round" stroke-linejoin="round"/></svg>
<div style="left:94.5px;top:695.5px;width:18.8px;height:18.8px;background:#fff;border:1px solid #c7cad2;border-radius:5px"></div>
<svg style="left:131px;top:694.4px" width="22" height="22" viewBox="0 0 22 22" ><circle cx="10.6" cy="10.4" r="8.5" fill="none" stroke="#989ba1" stroke-width="1.8"/><path d="M10.6 6.5V14.3M6.7 10.4H14.5" stroke="#989ba1" stroke-width="1.8" stroke-linecap="round"/></svg>
<span class="t" style="left:156.20px;top:695px;font-size:16.7px;color:#3f74c7;letter-spacing:0.547px">seo best practices</span>
<svg style="left:306.1px;top:697.5px" width="17" height="16" viewBox="0 0 17 16" ><path d="M2.4 2.9L6.9 7.65L2.4 12.4M8.8 2.9L13.3 7.65L8.8 12.4" fill="none" stroke="#95989e" stroke-width="2" stroke-linecap="round" stroke-linejoin="round"/></svg>
<div style="left:468.5px;top:695.8px;width:18.6px;height:17.8px;background:#fbd679;border-radius:4.5px"></div>
<span class="t" style="left:473.32px;top:695px;font-size:13.8px;color:#a95a00;font-weight:700">C</span>
<div style="left:491.5px;top:695.8px;width:18.6px;height:17.8px;background:#c3e3fb;border-radius:4.5px"></div>
<span class="t" style="left:498.79px;top:694px;font-size:14.4px;color:#3463b4;font-weight:700">I</span>
<span class="t" style="left:548.00px;top:695px;font-size:16.7px;color:#1c1e26;letter-spacing:0.500px">14</span>
<span class="t" style="left:628.14px;top:695px;font-size:12.6px;color:#999ba2">•</span>
<span class="t" style="left:781.67px;top:694px;font-size:17.2px;color:#1c1e26;letter-spacing:0.650px">-7</span>
<span class="t" style="left:844.25px;top:695px;font-size:16.7px;color:#1c1e26;letter-spacing:0.160px">&lt; 0.01</span>
<span class="t" style="left:950.25px;top:695px;font-size:16.7px;color:#1c1e26;letter-spacing:0.500px">2.4K</span>
<span class="t" style="left:1037.81px;top:694px;font-size:17.2px;color:#1c1e26;letter-spacing:0.650px">76</span>
<div style="left:1067px;top:697.0px;width:14.2px;height:14.2px;background:#e0414e;border-radius:50%"></div>
<span class="t" style="left:1100.20px;top:694px;font-size:16.7px;color:#3f74c7;letter-spacing:0.600px">neilpatel.com/blog/10-advanced-seo</span>
<span class="t" style="left:1100.45px;top:714px;font-size:16.7px;color:#3f74c7;letter-spacing:0.729px">-techniques-thatll-double-your-sear</span>
<span class="t" style="left:1100.69px;top:734px;font-size:17.02px;color:#3f74c7;letter-spacing:0.800px">ch-traffic/</span>
<svg style="left:1398.25px;top:693.5px" width="19" height="19" viewBox="0 0 19 19" ><path d="M6.4 5.6H2V16.2H12.6V11.8" fill="none" stroke="#a3a5ac" stroke-width="1.8"/><path d="M7.2 11L16.2 2M10.8 1.9H16.4V7.5" fill="none" stroke="#a3a5ac" stroke-width="1.8"/></svg>
<svg style="left:1444px;top:694.5px" width="20" height="17" viewBox="0 0 20 17" ><path d="M1 1H18.5V3.8H1Z" fill="#a1a4ac"/><path d="M1.9 2V14.2H8.2M17.6 2V5.6" fill="none" stroke="#a1a4ac" stroke-width="1.9"/><circle cx="13.3" cy="10.3" r="2.9" fill="none" stroke="#a1a4ac" stroke-width="1.7"/><path d="M15.4 12.4L18 15" stroke="#a1a4ac" stroke-width="1.9" stroke-linecap="round"/></svg>
<span class="t" style="left:1510.25px;top:695px;font-size:16.7px;color:#1c1e26;letter-spacing:-0.150px">Jul 11</span></article>
<div style="left:38px;top:767px;width:1538px;height:1px;background:#e1e2e8"></div></section></div>
<svg id="arrows" style="left:0;top:0" width="1600" height="785" viewBox="0 0 1600 785">
<g fill="#e8304a" stroke="none">
<path d="M536.5 73.2L438.4 148.8" stroke="#e8304a" stroke-width="22.6" stroke-linecap="round" fill="none"/>
<path d="M420.7 125.8L455.8 172.2L397.8 179.3Z"/>
<path d="M919.5 112.2L1034.4 157.2" stroke="#e8304a" stroke-width="22.8" stroke-linecap="round" fill="none"/>
<path d="M1044.6 130.1L1023.3 184.5L1081.5 175.1Z"/>
</g></svg>
</body></html>
